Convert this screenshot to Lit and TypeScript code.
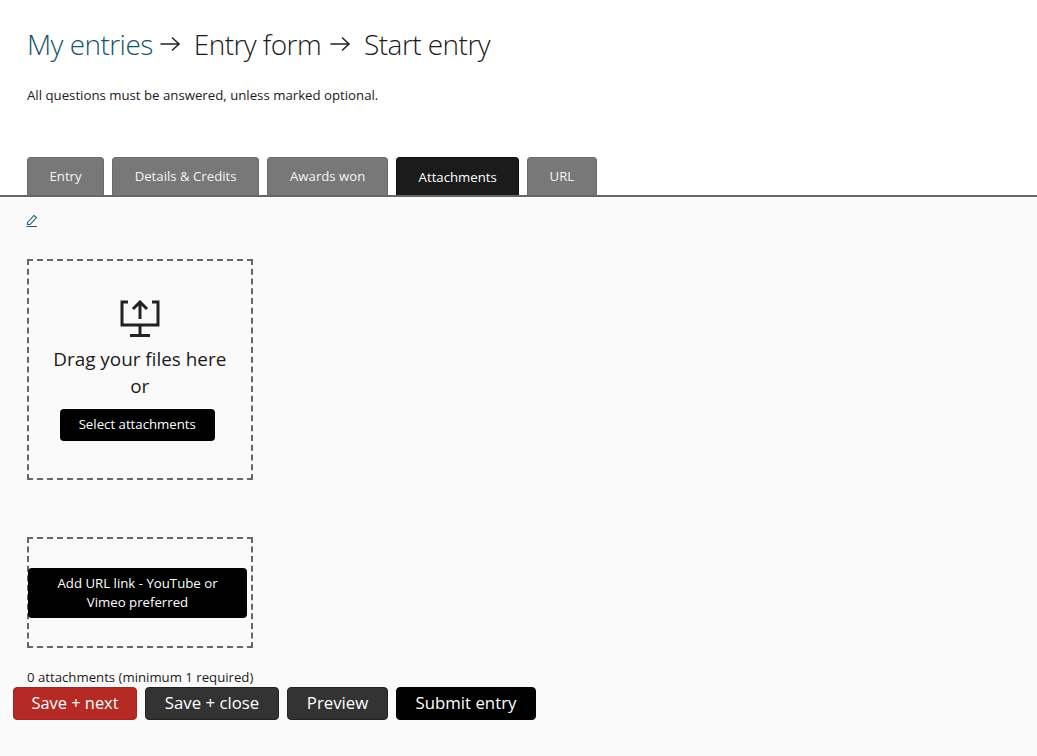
import { LitElement, html, css } from "lit";
import { customElement } from "lit/decorators.js";

@customElement("app-root")
export class AppRoot extends LitElement {
  static styles = css`
    :host { display: block; min-height: 756px; font-family: "Open Sans", sans-serif; color: #222; background: #fff; }
    .head { padding: 23px 27px 0; height: 157px; box-sizing: border-box; }
    h1 { margin: 0; font-weight: 300; font-size: 28px; line-height: 42px; letter-spacing: -0.55px; color: #1a1a1a; display: flex; align-items: center; white-space: nowrap; }
    h1 a { color: #14566c; }
    .arrow { display: block; margin: 0 12.5px 0 7.5px; }
    .arrow.second { margin: 0 13px 0 9px; }
    p { margin: 20px 0 0; font-size: 13.22px; line-height: 20px; color: #1a1a1a; }
    .tabs { display: flex; gap: 8px; padding-left: 27px; height: 38px; }
    .tab { box-sizing: border-box; height: 38px; background: #787878; color: #f4f4f4; border: 1px solid #6a6a6a; border-bottom: none; border-radius: 4px 4px 0 0; font-size: 13.2px; line-height: 36px; padding: 0 21.5px; }
    .tab.wide { padding: 0 22px; }
    .tab.active { background: #1b1b1b; border-color: #111; color: #fff; line-height: 38px; padding: 0 21.3px; }
    .main { background: #fafafa; border-top: 2px solid #666; height: 561px; box-sizing: border-box; }
    .edit { display: block; margin: 16px 0 0 25.5px; width: 12px; height: 14px; }
    .box { width: 226.5px; box-sizing: border-box; margin-left: 26.5px; border: 2px dashed #666; }
    .drop { height: 221px; margin-top: 32px; display: flex; flex-direction: column; align-items: center; padding-top: 39px; }
    .drop svg { display: block; }
    .drag { font-size: 18.9px; line-height: 26.5px; color: #1a1a1a; margin: 8px 0 0 0; text-align: center; }
    .blk { background: #000; color: #fff; border-radius: 4px; font-size: 13.22px; text-align: center; box-sizing: border-box; }
    .sel { width: 155px; height: 32px; line-height: 31px; margin: 10px 5px 0 0; }
    .url { height: 111px; margin-top: 57px; padding-top: 29px; }
    .add { width: 219px; height: 50px; margin-left: -0.5px; padding: 6px 24px; line-height: 19px; }
    .count { font-size: 13.2px; line-height: 18px; margin: 20px 0 0 27px; color: #1a1a1a; }
    .actions { display: flex; gap: 8px; padding-left: 13px; margin-top: 1px; }
    .btn { box-sizing: border-box; height: 33px; line-height: 30px; font-size: 16.8px; color: #fff; border-radius: 4px; text-align: center; border: 1px solid #222; }
    .red { background: #b52a24; border-color: #a32420; width: 124px; font-size: 16.4px; }
    .dark { background: #333; }
    .close { width: 134px; }
    .preview { width: 101px; }
    .black { background: #000; border-color: #000; width: 140px; }
  `;

  private arrow(cls = "") {
    return html`<svg class="arrow ${cls}" width="21" height="18" viewBox="0 0 21 18" fill="none" stroke="#222" stroke-width="1.5"><path d="M0.5 9h18.5M12 2.5 19 9l-7 6.5"/></svg>`;
  }

  render() {
    return html`
      <div class="head">
        <h1><a>My entries</a>${this.arrow()}<span>Entry form</span>${this.arrow("second")}<span>Start entry</span></h1>
        <p>All questions must be answered, unless marked optional.</p>
      </div>
      <div class="tabs">
        <div class="tab">Entry</div>
        <div class="tab">Details &amp; Credits</div>
        <div class="tab wide">Awards won</div>
        <div class="tab active">Attachments</div>
        <div class="tab">URL</div>
      </div>
      <div class="main">
        <svg class="edit" viewBox="0 0 12 14" fill="none" stroke="#1c5a70" stroke-width="1.1"><path d="M1.5 9.5 8 2.5l2.5 2-6.5 7H1.5zM0.5 13.5h10.5"/></svg>
        <div class="box drop">
          <svg width="40" height="38" viewBox="0 0 40 38" fill="none" stroke="#222" stroke-width="3">
            <path d="M8 2H2v23h36V2h-6M20 25v10M10 35.5h20M20 19V3M13 9l7-7 7 7"/>
          </svg>
          <div class="drag">Drag your files here<br />or</div>
          <div class="blk sel">Select attachments</div>
        </div>
        <div class="box url"><div class="blk add">Add URL link - YouTube or Vimeo preferred</div></div>
        <div class="count">0 attachments (minimum 1 required)</div>
        <div class="actions">
          <div class="btn red">Save + next</div>
          <div class="btn dark close">Save + close</div>
          <div class="btn dark preview">Preview</div>
          <div class="btn black">Submit entry</div>
        </div>
      </div>
    `;
  }
}
